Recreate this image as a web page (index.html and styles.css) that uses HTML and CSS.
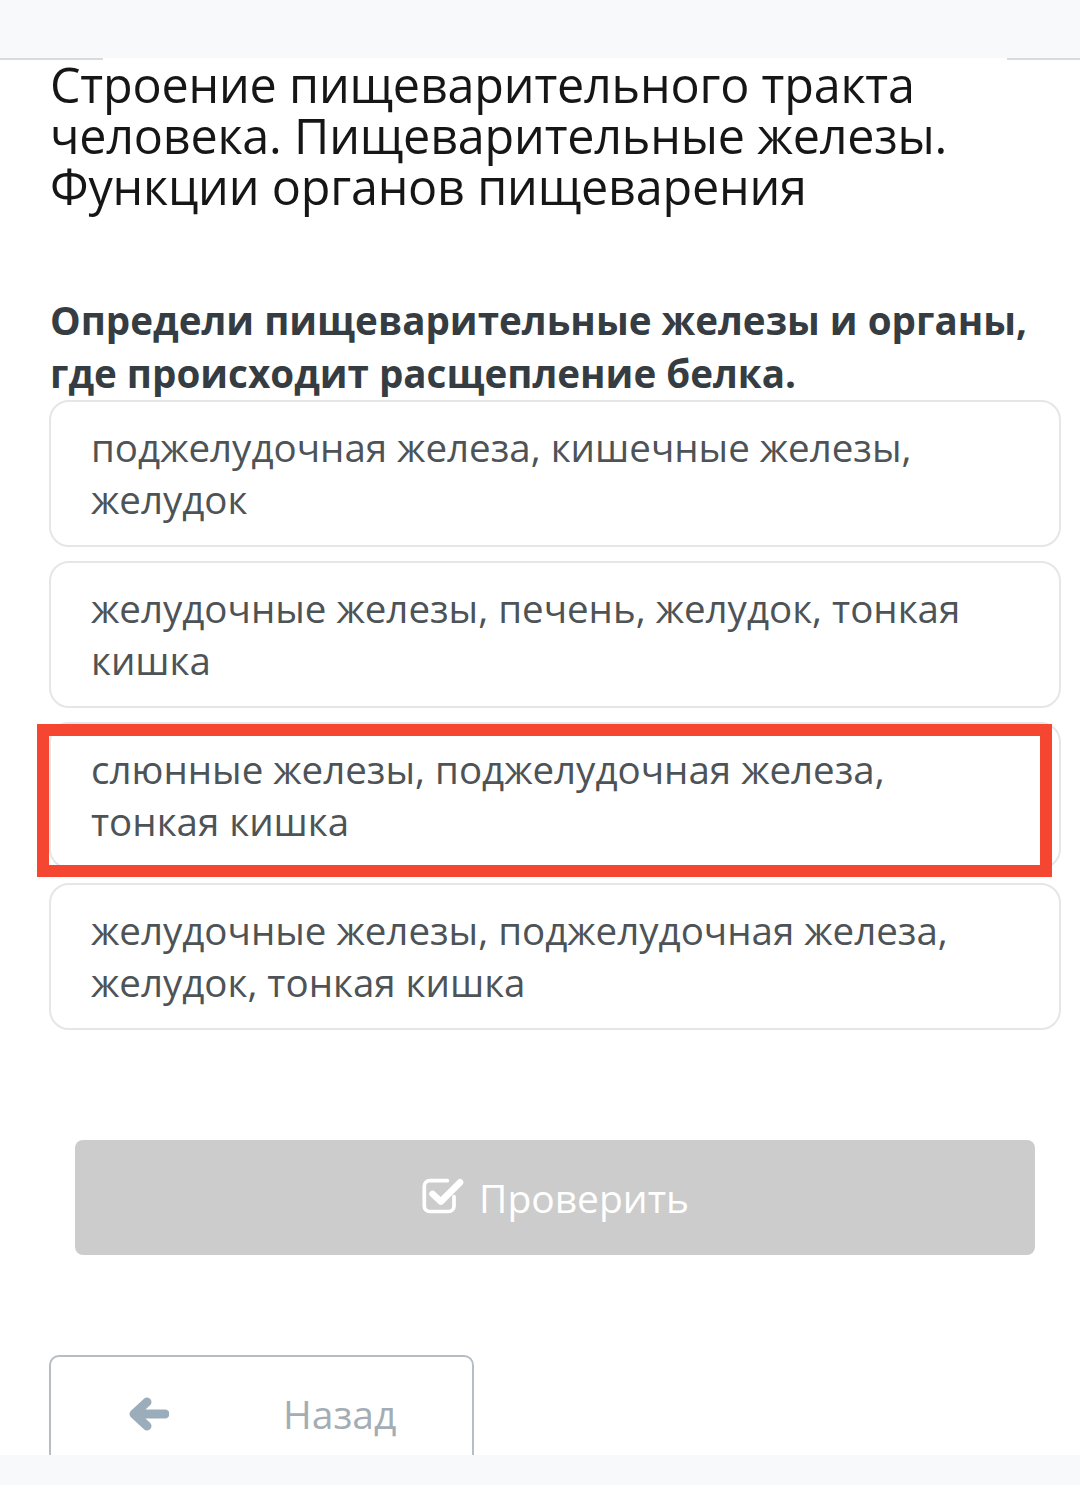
FILE: index.html
```html
<!DOCTYPE html>
<html lang="ru">
<head>
<meta charset="utf-8">
<title>Тест</title>
<link rel="stylesheet" href="styles.css">
</head>
<body>
<div class="page">
  <div class="topbar"></div>
  <div class="rule"><span class="rule-seg rule-left"></span><span class="rule-gap"></span><span class="rule-seg rule-right"></span></div>
  <main class="content">
    <h1 class="title">Строение пищеварительного тракта человека. Пищеварительные железы. Функции органов пищеварения</h1>
    <p class="question">Определи пищеварительные железы и органы, где происходит расщепление белка.</p>
    <div class="options">
      <div class="option">поджелудочная железа, кишечные железы, желудок</div>
      <div class="option">желудочные железы, печень, желудок, тонкая кишка</div>
      <div class="option option-marked">слюнные железы, поджелудочная железа, тонкая кишка<span class="mark"></span></div>
      <div class="option">желудочные железы, поджелудочная железа, желудок, тонкая кишка</div>
    </div>
    <div class="check-wrap">
      <button class="check-btn" type="button">
        <svg class="check-icon" viewBox="0 0 40 40" width="44" height="44" aria-hidden="true">
          <path d="M30 21.5 V30 a5 5 0 0 1 -5 5 H8 a5 5 0 0 1 -5 -5 V12 a5 5 0 0 1 5 -5 H24" fill="none" stroke="#fff" stroke-width="3.4" stroke-linecap="round"/>
          <path d="M10.5 19 L18 26 L35.5 8.5" fill="none" stroke="#fff" stroke-width="6" stroke-linecap="round" stroke-linejoin="round"/>
        </svg>
        <span>Проверить</span>
      </button>
    </div>
    <div class="nav">
      <button class="back-btn" type="button">
        <svg class="back-icon" viewBox="0 0 42 34" width="42" height="34" aria-hidden="true">
          <path d="M38 17 H8 M20 5 L7 17 L20 29" fill="none" stroke="#9badba" stroke-width="9" stroke-linecap="round" stroke-linejoin="round"/>
        </svg>
        <span class="back-label">Назад</span>
      </button>
    </div>
  </main>
  <div class="bottombar"></div>
</div>
</body>
</html>
```

FILE: styles.css
```css
html, body {
  margin: 0;
  padding: 0;
  background: #ffffff;
}

.page {
  width: 1080px;
  height: 1485px;
  display: flex;
  flex-direction: column;
  overflow: hidden;
  font-family: "Open Sans", "Noto Sans", sans-serif;
}

.topbar {
  height: 58px;
  background: #f8f9fa;
  flex: none;
}

.rule {
  display: flex;
  height: 2px;
  flex: none;
}

.rule-seg {
  background: #d9dcde;
  height: 2px;
}

.rule-left { width: 103px; }
.rule-gap { flex: 1; }
.rule-right { width: 73px; }

.content {
  flex: 1;
  min-height: 0;
  overflow: hidden;
  padding: 0 19px 0 49px;
}

.title {
  margin: -1px 0 0 0;
  padding-left: 1px;
  font-weight: 400;
  font-size: 48.5px;
  line-height: 51px;
  color: #161616;
  letter-spacing: -0.2px;
}

.question {
  margin: 82px 0 0 0;
  padding-left: 1px;
  font-weight: 700;
  font-size: 38.6px;
  line-height: 53px;
  color: #363d42;
}

.options {
  margin-top: 0;
  display: flex;
  flex-direction: column;
  gap: 13px;
}

.option {
  position: relative;
  border: 2px solid #e4e6e8;
  border-radius: 20px;
  padding: 19px 60px 20px 40px;
  font-size: 38.5px;
  line-height: 52px;
  color: #4d5356;
  min-height: 104px;
}

.option + .option {
  margin-top: 1px;
}

.mark {
  position: absolute;
  left: -14px;
  top: 0;
  width: 1015px;
  height: 153px;
  border: 12px solid #f44631;
  box-sizing: border-box;
}

.check-wrap {
  padding: 110px 26px 0 26px;
}

.check-btn {
  width: 960px;
  height: 115px;
  border: none;
  border-radius: 8px;
  background: #cccccc;
  color: #ffffff;
  font-family: "Open Sans", "Noto Sans", sans-serif;
  font-size: 39px;
  display: flex;
  align-items: center;
  justify-content: center;
  gap: 14px;
  padding: 0;
}

.check-icon {
  margin-top: -6px;
}

.nav {
  padding-top: 100px;
}

.back-btn {
  width: 425px;
  height: 130px;
  background: #ffffff;
  border: 2px solid #b6bec3;
  border-radius: 10px;
  display: flex;
  align-items: flex-start;
  padding: 35px 0 0 76px;
  font-family: "Open Sans", "Noto Sans", sans-serif;
  color: #a3adb3;
  font-size: 39px;
}

.back-icon {
  margin-top: 5px;
}

.back-label {
  margin-left: 114px;
  line-height: 44px;
}

.bottombar {
  height: 30px;
  background: #f8f9fa;
  flex: none;
}
```
